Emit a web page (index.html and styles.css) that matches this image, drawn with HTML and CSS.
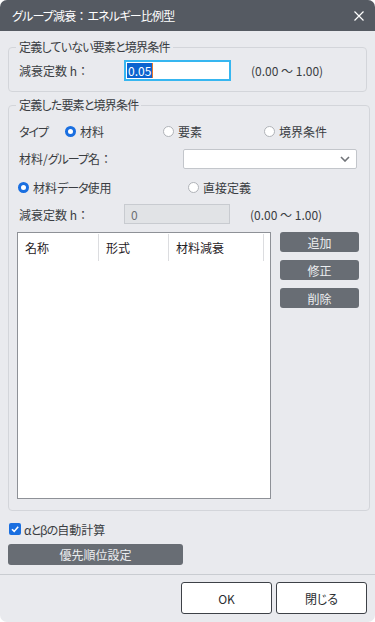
FILE: index.html
```html
<!DOCTYPE html>
<html>
<head>
    <meta charset="UTF-8">
    <link rel="stylesheet" href="styles.css">
</head>
<body>
<div class="dialog">
    <div class="titlebar">
        <span class="title">グループ減衰<span class="fw">：</span>エネルギー比例型</span>
        <svg class="close" width="10" height="10" viewBox="0 0 10 10">
            <path d="M0.5 0.5 L9.5 9.5 M9.5 0.5 L0.5 9.5" stroke="#fff" stroke-width="1.2" fill="none"/>
        </svg>
    </div>

    <div class="content">
        <fieldset class="group g1">
            <legend>定義していない要素と境界条件</legend>
            <div class="row first">
                <span class="lbl">減衰定数 h<span class="fw">：</span></span>
                <div class="field focus"><span class="sel">0.05</span><span class="caret"></span></div>
                <span class="range">(0.00&nbsp;～&nbsp;1.00)</span>
            </div>
        </fieldset>

        <fieldset class="group g2">
            <legend>定義した要素と境界条件</legend>
            <div class="row type-row">
                <span class="type-lbl">タイプ</span>
                <span class="opt opt1"><span class="radio on"></span>材料</span>
                <span class="opt opt2"><span class="radio"></span>要素</span>
                <span class="opt"><span class="radio"></span>境界条件</span>
            </div>
            <div class="row select-row">
                <span class="lbl wide">材料/<span class="kana">グループ</span>名<span class="fw">：</span></span>
                <div class="combo">
                    <svg width="10" height="6" viewBox="0 0 10 6">
                        <path d="M1 1 L5 5 L9 1" stroke="#707378" stroke-width="1.6" fill="none"/>
                    </svg>
                </div>
            </div>
            <div class="row radio-row">
                <span class="opt opt-use"><span class="radio on"></span>材料<span class="kana">データ</span>使用</span>
                <span class="opt"><span class="radio"></span>直接定義</span>
            </div>
            <div class="row damp-row">
                <span class="lbl">減衰定数 h<span class="fw">：</span></span>
                <div class="field disabled">0</div>
                <span class="range">(0.00&nbsp;～&nbsp;1.00)</span>
            </div>
            <div class="list-area">
                <div class="table">
                    <div class="thead">
                        <span class="th c1">名称</span>
                        <span class="th c2">形式</span>
                        <span class="th c3">材料減衰</span>
                    </div>
                </div>
                <div class="side-btns">
                    <button class="btn">追加</button>
                    <button class="btn">修正</button>
                    <button class="btn">削除</button>
                </div>
            </div>
        </fieldset>

        <div class="check-row">
            <span class="checkbox">
                <svg width="10" height="10" viewBox="0 0 10 10">
                    <path d="M2 5.2 L4.2 7.4 L8.2 2.8" stroke="#fff" stroke-width="1.6" fill="none"/>
                </svg>
            </span>
            <span class="kana">αとβの</span>自動計算
        </div>
        <button class="btn priority">優先順位設定</button>
    </div>

    <div class="footer">
        <button class="btn-plain">OK</button>
        <button class="btn-plain">閉じる</button>
    </div>
</div>
</body>
</html>
```

FILE: styles.css
```css
html, body {
    margin: 0;
    padding: 0;
    background-color: #ffffff;
}

body {
    font-family: "Noto Sans CJK JP", "Noto Sans", sans-serif;
    font-size: 12px;
    color: #3a3d42;
    font-feature-settings: "palt";
}

/* full width colon, like the original UI font */
.fw {
    font-feature-settings: normal;
    letter-spacing: 0;
}

/* kana in the original font are much narrower */
.kana {
    letter-spacing: -1px;
}

.dialog {
    width: 375px;
    height: 622px;
    background-color: #e9eaee;
    border-radius: 7px;
    overflow: hidden;
    display: flex;
    flex-direction: column;
}

.titlebar {
    height: 31px;
    background-color: #555a62;
    display: flex;
    align-items: center;
    justify-content: space-between;
    padding: 0 11px 0 12px;
    flex-shrink: 0;
}

.title {
    color: #ffffff;
    font-size: 12px;
    line-height: 16px;
    letter-spacing: -0.8px;
}

.close {
    margin-top: 1px;
}

.content {
    flex: 1;
    padding: 0 8px;
}

.group {
    margin: 0;
    border: 1px solid #d3d5da;
    border-radius: 4px;
    padding: 0 10px;
}

.group legend {
    padding: 0 3px;
    margin-left: -3px;
    line-height: 16px;
    letter-spacing: -0.8px;
}

.g1 {
    margin-top: 8px;
    padding-bottom: 10px;
}

.g2 {
    margin-top: 5px;
    padding-bottom: 11px;
}

.row {
    display: flex;
    align-items: center;
}

.first {
    margin-top: 5px;
    height: 21px;
}

.lbl {
    width: 105px;
}

.lbl.wide {
    width: 164px;
}

.field {
    box-sizing: border-box;
    width: 107px;
    height: 21px;
    background-color: #ffffff;
    display: flex;
    align-items: center;
}

.field.focus {
    border: 2px solid #36b6f0;
    padding-left: 1px;
}

.sel {
    background-color: #0b63cf;
    color: #ffffff;
    line-height: 15px;
    padding: 0 1px;
}

.caret {
    width: 1px;
    height: 15px;
    background-color: #e8772a;
}

.field.disabled {
    width: 106px;
    height: 20px;
    border: 1px solid #c8cbd0;
    background-color: #e1e3e6;
    color: #6c6f74;
    padding-left: 6px;
}

.range {
    margin-left: 20px;
    font-feature-settings: normal;
}

.type-row {
    margin-top: 8px;
    height: 20px;
}

.type-lbl {
    width: 46px;
    letter-spacing: -1px;
}

.opt {
    display: flex;
    align-items: center;
}

.opt1 {
    width: 98px;
}

.opt2 {
    width: 101px;
}

.radio {
    box-sizing: border-box;
    width: 11px;
    height: 11px;
    border-radius: 50%;
    border: 1px solid #b0b3b8;
    background-color: #ffffff;
    margin-right: 4px;
}

.radio.on {
    border: 3px solid #1a6fe0;
}

.select-row {
    margin-top: 8px;
    height: 19px;
}

.combo {
    box-sizing: border-box;
    width: 174px;
    height: 20px;
    background-color: #ffffff;
    border: 1px solid #c3c6cb;
    border-radius: 2px;
    display: flex;
    align-items: center;
    justify-content: flex-end;
    padding-right: 6px;
}

.radio-row {
    margin-top: 9px;
    height: 20px;
    margin-left: -1px;
}

.opt-use {
    width: 170px;
}

.damp-row {
    margin-top: 7px;
    height: 20px;
}

.list-area {
    display: flex;
    margin-top: 8px;
    gap: 9px;
}

.table {
    box-sizing: border-box;
    width: 254px;
    height: 267px;
    margin-left: -2px;
    background-color: #ffffff;
    border: 1px solid #8e9197;
}

.thead {
    display: flex;
    height: 27px;
    padding-top: 1px;
}

.th {
    box-sizing: border-box;
    color: #1f2125;
    padding-left: 7px;
    display: flex;
    align-items: center;
    border-right: 1px solid #dcdde0;
}

.c1 {
    width: 81px;
}

.c2 {
    width: 70px;
}

.c3 {
    width: 95px;
}

.side-btns {
    display: flex;
    flex-direction: column;
    gap: 8px;
}

.btn {
    font-family: inherit;
    font-size: 12px;
    font-feature-settings: "palt";
    width: 79px;
    height: 20px;
    border: none;
    border-radius: 3px;
    background-color: #686d74;
    color: #eceef0;
    padding: 0;
    cursor: pointer;
}

.check-row {
    display: flex;
    align-items: center;
    margin-top: 11px;
    height: 14px;
    padding-left: 1px;
}

.checkbox {
    width: 12px;
    height: 12px;
    border-radius: 2px;
    background-color: #1a6fe0;
    display: flex;
    align-items: center;
    justify-content: center;
    margin-right: 3px;
}

.priority {
    display: block;
    width: 175px;
    height: 21px;
    margin-top: 8px;
}

.footer {
    border-top: 1px solid #c9ccd1;
    padding: 7px 8px 8px;
    display: flex;
    justify-content: flex-end;
    gap: 4px;
}

.btn-plain {
    font-family: inherit;
    font-size: 12px;
    font-feature-settings: "palt";
    width: 91px;
    height: 32px;
    background-color: #ffffff;
    border: 1px solid #3d4147;
    border-radius: 3px;
    color: #2a2d31;
    padding: 0;
}
```
